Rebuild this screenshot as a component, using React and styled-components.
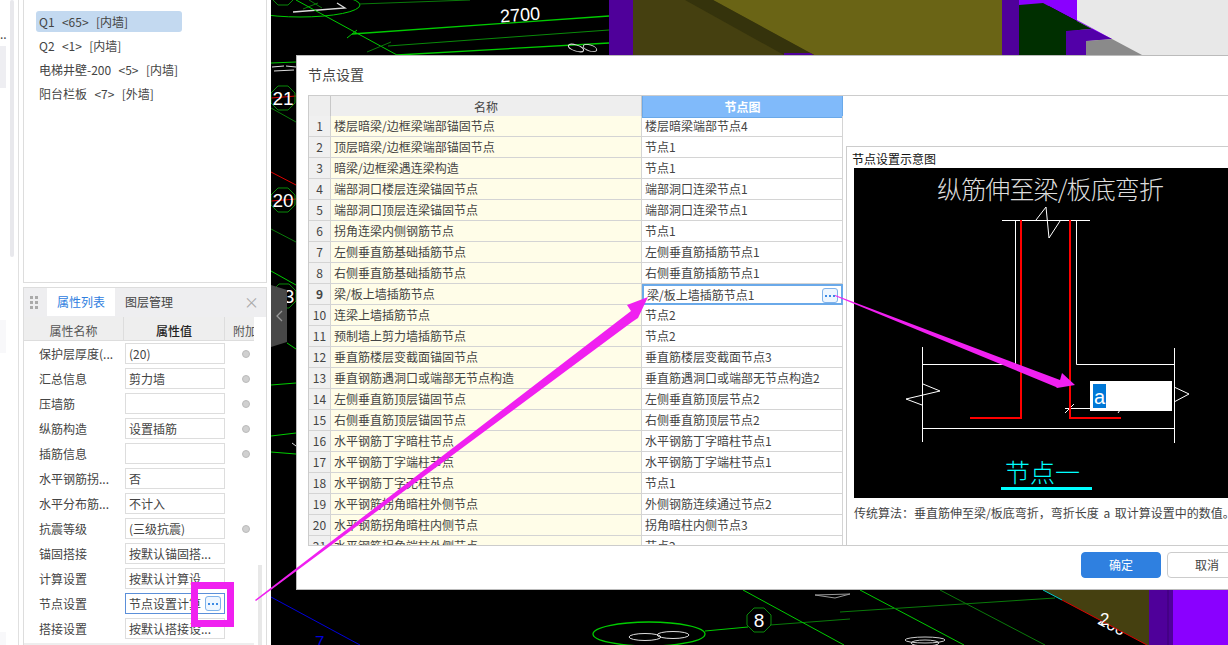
import React from "react";
import styled, { createGlobalStyle } from "styled-components";

const FONT = `"Noto Sans CJK SC", "Noto Sans", sans-serif`;

const GlobalStyle = createGlobalStyle`
    html, body {
        margin: 0;
        padding: 0;
        background: #fff;
    }
    * {
        box-sizing: border-box;
    }
`;

const Page = styled.div`
    position: relative;
    display: flex;
    width: 1228px;
    height: 645px;
    overflow: hidden;
    font-family: ${FONT};
    font-size: 12px;
    color: #444;
`;

/* far left, mostly cut off panel */
const Strip = styled.div`
    position: relative;
    flex: 0 0 19px;
    border-right: 1px solid #e0e0e0;
    background: #fff;
`;

const StripBlock = styled.div`
    position: absolute;
    left: 0;
    width: 6px;
    top: ${({ top }) => top}px;
    height: ${({ h }) => h}px;
    background: ${({ light }) => (light ? "#f8f8fa" : "#eeeef2")};
`;

const StripScroll = styled.div`
    position: absolute;
    left: 10px;
    top: 0;
    width: 4px;
    height: 257px;
    background: #e8e8ec;
    border-radius: 2px;
`;

const StripDots = styled.div`
    position: absolute;
    left: 0;
    top: 26px;
    font-size: 12px;
    line-height: 16px;
    color: #444;
`;

const Side = styled.div`
    flex: 0 0 252px;
    display: flex;
    flex-direction: column;
    gap: 4px;
    padding: 0 4px 0 4px;
    background: #fff;
`;

const ListPanel = styled.div`
    height: 283px;
    padding: 11px 0 0 12px;
    border: 1px solid #ddd;
    border-top: none;
    display: flex;
    flex-direction: column;
    gap: 3px;
`;

const ListItem = styled.div`
    width: 146px;
    height: 21px;
    line-height: 21px;
    padding-left: 3px;
    border-radius: 3px;
    white-space: pre;
    word-spacing: 1px;
    background: ${({ selected }) => (selected ? "#c3d9f0" : "transparent")};
`;

const PropPanel = styled.div`
    flex: 1;
    display: flex;
    flex-direction: column;
    border: 1px solid #ddd;
    border-bottom: none;
    min-height: 0;
`;

const PanelTabs = styled.div`
    display: flex;
    align-items: flex-start;
    height: 29px;
    flex: none;
    background: #eeeef0;
`;

const Grip = styled.div`
    flex: 0 0 23px;
    height: 28px;
    display: grid;
    grid-template-columns: 3px 3px;
    grid-auto-rows: 3px;
    gap: 2px;
    padding-left: 6px;
    align-content: center;
    & > i {
        background: #aaa;
    }
`;

const Tab = styled.div`
    width: 68px;
    height: 28px;
    line-height: 28px;
    text-align: center;
    background: ${({ active }) => (active ? "#fff" : "transparent")};
    color: ${({ active }) => (active ? "#2f80e0" : "#444")};
`;

const CloseMark = styled.div`
    margin-left: auto;
    width: 29px;
    text-align: center;
    line-height: 28px;
    font-size: 15px;
    color: #aaa;
`;

const PropBody = styled.div`
    display: flex;
    flex: 1;
    min-height: 0;
`;

const PropTable = styled.div`
    width: 230px;
    overflow: hidden;
`;

const PropHead = styled.div`
    display: grid;
    grid-template-columns: 100px 101px 29px;
    height: 24px;
    background: #eee;
    border-bottom: 1px solid #ddd;
    white-space: nowrap;
`;

const PropHeadCell = styled.div`
    height: 23px;
    line-height: 28px;
    text-align: center;
    border-right: 1px solid #ddd;
    overflow: hidden;
    color: ${({ strong }) => (strong ? "#222" : "#555")};
    font-weight: ${({ strong }) => (strong ? 500 : 400)};
`;

const PropHeadEnd = styled(PropHeadCell)`
    padding-left: 8px;
    text-align: left;
    border-right: none;
`;

const PropRow = styled.div`
    display: grid;
    grid-template-columns: 101px 100px 29px;
    height: 25px;
    align-items: center;
`;

const PropName = styled.div`
    padding-left: 15px;
    white-space: nowrap;
`;

const PropValue = styled.div`
    position: relative;
    height: 21px;
    line-height: 19px;
    padding-left: 3px;
    white-space: nowrap;
    overflow: hidden;
    border: 1px solid ${({ active }) => (active ? "#5b8fd9" : "#ddd")};
`;

const Radio = styled.span`
    display: block;
    width: 8px;
    height: 8px;
    margin-left: 17px;
    border-radius: 50%;
    background: #d0d0d0;
    border: 1px solid #bbb;
`;

const DotsBtn = styled.span`
    position: absolute;
    display: flex;
    align-items: center;
    justify-content: center;
    gap: 2px;
    right: 3px;
    top: 2px;
    width: 16px;
    height: 15px;
    background: #eef6ff;
    border: 1px solid #7fb2ea;
    border-radius: 3px;
    & > i {
        width: 2px;
        height: 2px;
        background: #3d8ae4;
    }
`;

const PropFoot = styled.div`
    height: 5px;
    margin-top: 2px;
    background: #eee;
`;

const PropScroll = styled.div`
    position: relative;
    flex: 1;
    &::after {
        content: "";
        position: absolute;
        left: 4px;
        top: 248px;
        bottom: 0;
        width: 4px;
        background: #e8e8e8;
    }
`;

const Canvas = styled.div`
    position: relative;
    flex: 1;
    background: #000;
`;

const CanvasSvg = styled.svg`
    display: block;
`;

const Dialog = styled.div`
    position: absolute;
    left: 296px;
    top: 55px;
    width: 960px;
    height: 535px;
    display: flex;
    flex-direction: column;
    background: #fff;
    border: 1px solid #bbb;
`;

const DialogTitle = styled.div`
    height: 39px;
    padding-left: 11px;
    line-height: 36px;
    font-size: 14px;
    color: #444;
    flex: none;
`;

const DialogBody = styled.div`
    display: flex;
    height: 451px;
    flex: none;
    border-top: 1px solid #ccc;
    border-bottom: 1px solid #ccc;
    margin-left: 11px;
`;

const TableWrap = styled.div`
    flex: 0 0 538px;
    overflow: hidden;
    border-left: 1px solid #ccc;
`;

const GridRow = styled.div`
    display: grid;
    grid-template-columns: 22px 311px 201px;
    height: ${({ head }) => (head ? 20 : 21)}px;
`;

const NumCell = styled.div`
    line-height: 20px;
    text-align: center;
    background: #f0f0f0;
    border-right: 1px solid #d4d4d4;
    border-bottom: 1px solid #d4d4d4;
    font-weight: ${({ active }) => (active ? 700 : 400)};
`;

const NameCell = styled.div`
    padding-left: 3px;
    line-height: 20px;
    white-space: nowrap;
    background: #fffde8;
    border-right: 1px solid #d4d4d4;
    border-bottom: 1px solid #d4d4d4;
`;

const NodeCell = styled.div`
    position: relative;
    padding-left: 3px;
    line-height: 20px;
    white-space: nowrap;
    border-right: 1px solid #d4d4d4;
    border-bottom: 1px solid #d4d4d4;
`;

const EditCell = styled(NodeCell)`
    border: 2px solid #6aa9e9;
    padding-left: 3px;
    line-height: 17px;
`;

const HeadCell = styled.div`
    line-height: 21px;
    text-align: center;
    background: #eee;
    border-right: 1px solid #c8c8c8;
    border-bottom: 1px solid #c0c0c0;
`;

const HeadCellOn = styled(HeadCell)`
    background: #80bafa;
    color: #fff;
    font-weight: 700;
    border: 1px solid #6aa9e9;
    border-top: none;
`;

const Pane = styled.div`
    flex: 1;
    min-width: 0;
    margin-top: 50px;
    border-top: 1px solid #ccc;
    border-left: 1px solid #ccc;
    padding: 6px 0 0 5px;
`;

const PaneLabel = styled.div`
    height: 15px;
    line-height: 12px;
    color: #111;
`;

const Sketch = styled.div`
    margin-left: 2px;
    width: 400px;
    height: 330px;
    background: #000;
`;

const SketchSvg = styled.svg`
    display: block;
`;

const PaneNote = styled.div`
    margin: 6px 0 0 2px;
    line-height: 18px;
    white-space: nowrap;
    word-spacing: 2px;
`;

const DialogFoot = styled.div`
    flex: 1;
    display: flex;
    gap: 6px;
    padding: 6px 0 0 784px;
`;

const Button = styled.div`
    width: 80px;
    height: 26px;
    line-height: 24px;
    text-align: center;
    border-radius: 4px;
    background: ${({ primary }) => (primary ? "#2f80e0" : "#fff")};
    color: ${({ primary }) => (primary ? "#fff" : "#444")};
    border: 1px solid ${({ primary }) => (primary ? "#2f80e0" : "#ccc")};
`;

const Overlay = styled.svg`
    position: absolute;
    left: 0;
    top: 0;
    pointer-events: none;
`;

const walls = ["Q1  <65>  [内墙]", "Q2  <1>  [内墙]", "电梯井壁-200  <5>  [内墙]", "阳台栏板  <7>  [外墙]"];

const props = [
    ["保护层厚度(...", "(20)", true],
    ["汇总信息", "剪力墙", true],
    ["压墙筋", "", true],
    ["纵筋构造", "设置插筋", true],
    ["插筋信息", "", true],
    ["水平钢筋拐...", "否", false],
    ["水平分布筋...", "不计入", false],
    ["抗震等级", "(三级抗震)", true],
    ["锚固搭接", "按默认锚固搭...", false],
    ["计算设置", "按默认计算设", false],
    ["节点设置", "节点设置计算", false, true],
    ["搭接设置", "按默认搭接设...", false],
];

const nodes = [
    ["楼层暗梁/边框梁端部锚固节点", "楼层暗梁端部节点4"],
    ["顶层暗梁/边框梁端部锚固节点", "节点1"],
    ["暗梁/边框梁遇连梁构造", "节点1"],
    ["端部洞口楼层连梁锚固节点", "端部洞口连梁节点1"],
    ["端部洞口顶层连梁锚固节点", "端部洞口连梁节点1"],
    ["拐角连梁内侧钢筋节点", "节点1"],
    ["左侧垂直筋基础插筋节点", "左侧垂直筋插筋节点1"],
    ["右侧垂直筋基础插筋节点", "右侧垂直筋插筋节点1"],
    ["梁/板上墙插筋节点", "梁/板上墙插筋节点1"],
    ["连梁上墙插筋节点", "节点2"],
    ["预制墙上剪力墙插筋节点", "节点2"],
    ["垂直筋楼层变截面锚固节点", "垂直筋楼层变截面节点3"],
    ["垂直钢筋遇洞口或端部无节点构造", "垂直筋遇洞口或端部无节点构造2"],
    ["左侧垂直筋顶层锚固节点", "左侧垂直筋顶层节点2"],
    ["右侧垂直筋顶层锚固节点", "右侧垂直筋顶层节点2"],
    ["水平钢筋丁字暗柱节点", "水平钢筋丁字暗柱节点1"],
    ["水平钢筋丁字端柱节点", "水平钢筋丁字端柱节点1"],
    ["水平钢筋丁字无柱节点", "节点1"],
    ["水平钢筋拐角暗柱外侧节点", "外侧钢筋连续通过节点2"],
    ["水平钢筋拐角暗柱内侧节点", "拐角暗柱内侧节点3"],
    ["水平钢筋拐角端柱外侧节点", "节点2"],
];

const Dots = () => (
    <DotsBtn>
        <i />
        <i />
        <i />
    </DotsBtn>
);

const hexPoints = (cx, cy, r) =>
    Array.from({ length: 8 }, (_, i) => {
        const a = (Math.PI / 4) * i + Math.PI / 8;
        return `${cx + r * Math.cos(a)},${cy + r * Math.sin(a)}`;
    }).join(" ");

const Axis = ({ x, y, label, textX }) => (
    <g>
        <polygon points={hexPoints(x, y, 13)} fill="none" stroke="#0a8a0a" />
        <text
            x={textX || x}
            y={y + 7}
            fontSize="19"
            fill="#fff"
            textAnchor="middle"
            fontFamily="Liberation Sans, sans-serif"
        >
            {label}
        </text>
    </g>
);

// CAD view behind the dialog, coordinates are page pixels
const CadView = () => (
    <CanvasSvg width="957" height="645" viewBox="271 0 957 645">
        <rect x="271" y="0" width="957" height="645" fill="#000" />

        <polygon points="609,0 633,0 633,55 609,55" fill="#4f009a" />
        <polygon points="633,0 1002,0 1002,55 633,55" fill="#454010" />
        <polygon points="713,0 1002,0 1002,55 814,55" fill="#6a6415" />
        <polygon points="685,0 713,0 814,55 784,55" fill="#35330c" />
        <polygon points="784,53 810,53 814,55 784,55" fill="#4f009a" />
        <rect x="1002" y="0" width="17" height="55" fill="#4f009a" />
        <rect x="1019" y="0" width="58" height="6" fill="#8a00ff" />
        <rect x="1077" y="0" width="151" height="55" fill="#e8e8e8" />
        <polygon points="1040,0 1077,0 1077,20 1112,39 1086,41 1086,55 1066,55 1066,31 1092,29 1043,3" fill="#8a00ff" />
        <polygon points="1043,3 1092,29 1066,31 1066,55 1019,55 1019,5" fill="#002f00" />
        <polygon points="1066,31 1092,29 1112,39 1086,41 1086,55 1066,55" fill="#5200a8" />
        <polygon points="1086,41 1112,39 1142,55 1086,55" fill="#8a8a8a" />

        <ellipse cx="300" cy="5" rx="60" ry="12" fill="none" stroke="#0c0" />
        <path d="M293 12 L345 8 L337 3" fill="none" stroke="#ddd" strokeWidth="1.3" />
        <path d="M303 9 L318 3 M309 0 L322 8" fill="none" stroke="#0a7a0a" />
        <line x1="296" y1="0" x2="397" y2="55" stroke="#0c0" />
        <line x1="352" y1="34" x2="609" y2="16" stroke="#0c0" strokeWidth="1.3" />
        <line x1="388" y1="46" x2="609" y2="30" stroke="#0a8a0a" />
        <line x1="397" y1="55" x2="609" y2="43" stroke="#0c0" strokeWidth="1.3" />
        <line x1="359" y1="4" x2="470" y2="0" stroke="#0a7a0a" />
        <line x1="367" y1="52" x2="391" y2="42" stroke="#0a7a0a" />
        <path d="M347 38 L357 30" fill="none" stroke="#0c0" />
        <text x="500" y="21" fontSize="18" fill="#fff" fontFamily="Liberation Sans, sans-serif" transform="rotate(-4 520 15)">
            2700
        </text>
        <ellipse cx="576" cy="48" rx="8" ry="3" fill="none" stroke="#ddd" transform="rotate(18 576 48)" />
        <ellipse cx="590" cy="48" rx="7" ry="3" fill="none" stroke="#ddd" transform="rotate(18 590 48)" />

        <line x1="271" y1="63" x2="296" y2="62" stroke="#0c0" />
        <path d="M272 67 L284 66 M274 71 L294 70 M286 66 L296 67" stroke="#ddd" fill="none" />
        <line x1="271" y1="172" x2="296" y2="185" stroke="#d00" />
        <line x1="271" y1="108" x2="296" y2="122" stroke="#0a7a0a" />
        <line x1="271" y1="229" x2="296" y2="242" stroke="#0a7a0a" />
        <line x1="271" y1="271" x2="296" y2="285" stroke="#0c0" />
        <line x1="271" y1="98" x2="296" y2="96" stroke="#d00" />
        <line x1="271" y1="201" x2="296" y2="199" stroke="#d00" />
        <Axis x={283} y={-7} label="" />
        <Axis x={283} y={98} label="21" />
        <Axis x={283} y={200} label="20" />
        <Axis x={284} y={296} label="3" textX={289} />
        <polygon points="271,285 287,290 287,342 271,347" fill="#484848" />
        <path d="M282 311 L277 316 L282 321" fill="none" stroke="#999" strokeWidth="1.3" />
        <line x1="287" y1="343" x2="296" y2="349" stroke="#0c0" />
        <line x1="271" y1="385" x2="296" y2="383" stroke="#0c0" />
        <line x1="271" y1="436" x2="296" y2="433" stroke="#0c0" />
        <line x1="271" y1="452" x2="296" y2="454" stroke="#0c0" />
        <line x1="292" y1="443" x2="296" y2="446" stroke="#ddd" />
        <line x1="271" y1="597" x2="360" y2="645" stroke="#00d" />
        <text x="315" y="648" fontSize="17" fill="#00d" fontFamily="Liberation Sans, sans-serif">
            7
        </text>

        <ellipse cx="649" cy="634" rx="56" ry="12" fill="none" stroke="#0c0" strokeWidth="1.3" />
        <ellipse cx="645" cy="637" rx="16" ry="3.5" fill="none" stroke="#ddd" />
        <ellipse cx="673" cy="635" rx="16" ry="3.5" fill="none" stroke="#ddd" />
        <line x1="705" y1="631" x2="748" y2="627" stroke="#0c0" />
        <line x1="770" y1="625" x2="850" y2="619" stroke="#0a7a0a" />
        <line x1="743" y1="590" x2="844" y2="645" stroke="#0c0" />
        <Axis x={759} y={620} label="8" />
        <path d="M815 595 L850 594 L835 598 Z" fill="none" stroke="#999" />

        <line x1="860" y1="590" x2="964" y2="645" stroke="#0c0" />
        <line x1="940" y1="590" x2="1045" y2="645" stroke="#0a7a0a" />
        <line x1="840" y1="612" x2="1055" y2="598" stroke="#0a7a0a" />
        <ellipse cx="925" cy="640" rx="20" ry="3" fill="none" stroke="#ccc" />
        <ellipse cx="925" cy="643" rx="14" ry="3" fill="none" stroke="#ccc" />
        {/* the zeros sit half under the olive face */}
        <text x="1098" y="632" fontSize="17" fill="#fff" fontFamily="Liberation Sans, sans-serif" transform="rotate(28 1115 625)">
            200
        </text>
        <polygon points="1043,590 1149,590 1149,645 1147,645" fill="#454010" />
        <line x1="1043" y1="590" x2="1062" y2="600" stroke="#0cc" />
        <line x1="1062" y1="600" x2="1147" y2="645" stroke="#d00" />
        <text x="1100" y="625" fontSize="17" fill="#fff" fontFamily="Liberation Sans, sans-serif">
            2
        </text>
        <rect x="1149" y="590" width="24" height="55" fill="#4f009a" />
        <line x1="1168" y1="590" x2="1168" y2="645" stroke="#3a0072" />
        <rect x="1173" y="590" width="55" height="55" fill="#8a00ff" />
    </CanvasSvg>
);

// detail drawing in the dialog, viewBox starts at its page position
const NodeSketch = () => (
    <SketchSvg width="400" height="330" viewBox="854 168 400 330">
        <text x="937" y="199" fontSize="25" fill="#ddd" fontWeight="300" fontFamily={FONT} textLength="227">
            纵筋伸至梁/板底弯折
        </text>

        <g fill="none" stroke="#fff" strokeWidth="1">
            <line x1="1002" y1="220.5" x2="1090" y2="220.5" />
            <path d="M1036 220 L1046 207 L1049 238 L1060 221" />
            <path d="M1015.5 220 V364.5 H922 M1076.5 220 V364.5 H1174" />
            <path d="M922.5 347 V442 M1174.5 348 V443 M922 428.5 H1174" />
            <path d="M923 384 L940 391 L906 399 L922 405" />
            <path d="M1174 387 L1189 394 L1174 402" />
            <path d="M1065 408.5 H1122 M1065 413 L1074 404 M1118 413 L1124 404" />
        </g>

        <g fill="none" stroke="#f00" strokeWidth="2">
            <path d="M1021 220 V418 H970" />
            <path d="M1070 220 V418 H1121" />
        </g>

        <rect x="1090" y="381" width="82" height="30" fill="#fff" />
        <rect x="1093" y="384" width="13" height="24" fill="#0078d7" />
        <text x="1094" y="404" fontSize="20" fill="#fff" fontFamily="Liberation Sans, sans-serif">
            a
        </text>

        <text x="1005" y="482" fontSize="25" fill="#0ff" fontWeight="300" fontFamily={FONT}>
            节点一
        </text>
        <rect x="1001" y="487" width="91" height="3" fill="#0ff" />
    </SketchSvg>
);

const Annotations = () => (
    <Overlay width="1228" height="645" viewBox="0 0 1228 645">
        <rect x="194.5" y="585.5" width="36" height="38" fill="none" stroke="#f020f0" strokeWidth="7" />
        <polygon points="255,600 256,601 632,322 638,318 648,297 627,305 631,311" fill="#f020f0" />
        <polygon points="835,295 835,296 1056,387 1057,388 1075,385 1062,373 1060,380" fill="#f020f0" />
    </Overlay>
);

export default function App() {
    return (
        <Page>
            <GlobalStyle />

            <Strip>
                <StripDots>..</StripDots>
                <StripBlock top={46} h={42} />
                <StripBlock top={320} h={33} light />
                <StripBlock top={632} h={13} light />
                <StripScroll />
            </Strip>

            <Side>
                <ListPanel>
                    {walls.map((w, i) => (
                        <ListItem key={w} selected={i === 0}>
                            {w}
                        </ListItem>
                    ))}
                </ListPanel>

                <PropPanel>
                    <PanelTabs>
                        <Grip>
                            {Array.from({ length: 6 }, (_, i) => (
                                <i key={i} />
                            ))}
                        </Grip>
                        <Tab active>属性列表</Tab>
                        <Tab>图层管理</Tab>
                        <CloseMark>×</CloseMark>
                    </PanelTabs>
                    <PropBody>
                        <PropTable>
                            <PropHead>
                                <PropHeadCell>属性名称</PropHeadCell>
                                <PropHeadCell strong>属性值</PropHeadCell>
                                <PropHeadEnd>附加</PropHeadEnd>
                            </PropHead>
                            {props.map(([name, value, radio, active]) => (
                                <PropRow key={name}>
                                    <PropName>{name}</PropName>
                                    <PropValue active={active}>
                                        {value}
                                        {active && <Dots />}
                                    </PropValue>
                                    <div>{radio && <Radio />}</div>
                                </PropRow>
                            ))}
                            <PropFoot />
                        </PropTable>
                        <PropScroll />
                    </PropBody>
                </PropPanel>
            </Side>

            <Canvas>
                <CadView />
            </Canvas>

            <Dialog>
                <DialogTitle>节点设置</DialogTitle>
                <DialogBody>
                    <TableWrap>
                        <GridRow head>
                            <HeadCell />
                            <HeadCell>名称</HeadCell>
                            <HeadCellOn>节点图</HeadCellOn>
                        </GridRow>
                        {nodes.map(([name, node], i) => (
                            <GridRow key={name}>
                                <NumCell active={i === 8}>{i + 1}</NumCell>
                                <NameCell>{name}</NameCell>
                                {i === 8 ? (
                                    <EditCell>
                                        {node}
                                        <Dots />
                                    </EditCell>
                                ) : (
                                    <NodeCell>{node}</NodeCell>
                                )}
                            </GridRow>
                        ))}
                    </TableWrap>
                    <Pane>
                        <PaneLabel>节点设置示意图</PaneLabel>
                        <Sketch>
                            <NodeSketch />
                        </Sketch>
                        <PaneNote>传统算法：垂直筋伸至梁/板底弯折，弯折长度 a 取计算设置中的数值。</PaneNote>
                    </Pane>
                </DialogBody>
                <DialogFoot>
                    <Button primary>确定</Button>
                    <Button>取消</Button>
                </DialogFoot>
            </Dialog>

            <Annotations />
        </Page>
    );
}
